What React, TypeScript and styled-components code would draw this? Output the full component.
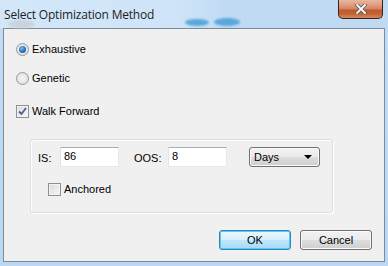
import React from 'react'
import styled, { createGlobalStyle } from 'styled-components'

const Global = createGlobalStyle`
  html, body { margin: 0; padding: 0; }
  body { font-family: "Liberation Sans", Arial, sans-serif; }
`

const Frame = styled.div`
  position: relative;
  width: 388px;
  height: 266px;
  box-sizing: border-box;
  background: linear-gradient(180deg, #c2dcf4 0%, #bcd7f1 100%);
  display: flex;
  flex-direction: column;
  overflow: hidden;
`

const TitleBar = styled.div`
  height: 28px;
  display: flex;
  align-items: flex-start;
  justify-content: space-between;
  flex-shrink: 0;
  background: linear-gradient(90deg, #d3e7f9 0%, #cfe4f8 45%, #c0daf3 60%, #c0daf3 100%);
`

const Title = styled.div`
  font-family: "Open Sans", "Noto Sans", sans-serif;
  font-size: 12px;
  color: #1e1e1e;
  padding: 6px 0 0 4px;
  letter-spacing: -0.2px;
`

const Smudge = styled.div<{ $x: number; $y: number; $w: number; $h: number; $c: string }>`
  position: absolute;
  left: ${p => p.$x}px;
  top: ${p => p.$y}px;
  width: ${p => p.$w}px;
  height: ${p => p.$h}px;
  border-radius: 50%;
  background: ${p => p.$c};
  filter: blur(1px);
`

const CloseButton = styled.div`
  width: 45px;
  height: 19px;
  margin-right: 5px;
  box-sizing: border-box;
  border: 1px solid #3b2216;
  border-top: none;
  border-radius: 0 0 5px 5px;
  background: linear-gradient(180deg, #e6b89d 0%, #e09a80 30%, #d4825f 50%, #c05a2c 55%, #c2602f 75%, #d08a67 100%);
  display: flex;
  align-items: center;
  justify-content: center;
`

const Client = styled.div`
  flex: 1;
  margin: 0 3px 4px 3px;
  border: 1px solid #7c8b99;
  background: #f0f0f0;
  display: flex;
  flex-direction: column;
  padding: 14px 0 0 12px;
  font-size: 11px;
  color: #000;
`

const OptionRow = styled.label<{ $mt?: number; $ml?: number }>`
  display: flex;
  align-items: center;
  gap: 3px;
  height: 13px;
  margin-top: ${p => p.$mt ?? 0}px;
  margin-left: ${p => p.$ml ?? 0}px;
  line-height: 13px;
`

const Radio = styled.span<{ $checked?: boolean }>`
  width: 13px;
  height: 13px;
  box-sizing: border-box;
  border-radius: 50%;
  border: 1px solid #8f99a6;
  background: radial-gradient(circle at 50% 50%, #f4f4f4 0%, #dcdcdc 100%);
  display: flex;
  align-items: center;
  justify-content: center;
  &::after {
    content: '';
    display: ${p => (p.$checked ? 'block' : 'none')};
    width: 7px;
    height: 7px;
    border-radius: 50%;
    background: radial-gradient(circle at 40% 35%, #7cc0f0 0%, #2a6fb8 55%, #1b4f8f 100%);
  }
`

const Box = styled.span`
  width: 13px;
  height: 13px;
  box-sizing: border-box;
  border: 1px solid #8e8f8f;
  background: linear-gradient(135deg, #dcdcdc 0%, #f5f5f5 100%);
  box-shadow: inset 0 0 0 1px #f4f4f4;
  display: flex;
  align-items: center;
  justify-content: center;
`

const Group = styled.div`
  margin: 21px 0 0 14px;
  width: 303px;
  height: 74px;
  box-sizing: border-box;
  border: 1px solid #d5dfe5;
  border-radius: 3px;
  box-shadow: inset 1px 1px 0 #fff, 1px 1px 0 #fff;
  padding: 7px 0 0 7px;
  display: flex;
  flex-direction: column;
`

const FieldRow = styled.div`
  display: flex;
  align-items: center;
  height: 20px;
`

const FieldLabel = styled.span<{ $w: number }>`
  width: ${p => p.$w}px;
  padding-top: 2px;
`

const TextInput = styled.div<{ $mr: number }>`
  width: 59px;
  height: 20px;
  box-sizing: border-box;
  border: 1px solid #e3e9ef;
  border-top-color: #abadb3;
  border-left-color: #e2e3ea;
  background: #fff;
  padding: 2px 0 0 3px;
  margin-right: ${p => p.$mr}px;
`

const Select = styled.div`
  width: 71px;
  height: 20px;
  box-sizing: border-box;
  border: 1px solid #707070;
  border-radius: 3px;
  background: linear-gradient(180deg, #f2f2f2 0%, #ebebeb 48%, #dddddd 52%, #cfcfcf 100%);
  box-shadow: inset 0 0 0 1px #fbfbfb;
  display: flex;
  align-items: center;
  justify-content: space-between;
  padding: 0 7px 0 4px;
`

const Arrow = styled.span`
  width: 0;
  height: 0;
  border-left: 4px solid transparent;
  border-right: 4px solid transparent;
  border-top: 4px solid #000;
`

const Buttons = styled.div`
  margin-top: auto;
  margin-bottom: 11px;
  margin-right: 12px;
  display: flex;
  justify-content: flex-end;
  gap: 9px;
`

const Button = styled.div<{ $default?: boolean }>`
  width: 72px;
  height: 20px;
  box-sizing: border-box;
  border: 1px solid ${p => (p.$default ? '#3c7fb1' : '#707070')};
  border-radius: 3px;
  background: ${p =>
    p.$default
      ? 'linear-gradient(180deg, #eaf6fd 0%, #d9f0fc 48%, #bee6fd 52%, #a7d9f5 100%)'
      : 'linear-gradient(180deg, #f2f2f2 0%, #ebebeb 48%, #dddddd 52%, #cfcfcf 100%)'};
  box-shadow: inset 0 0 0 1px ${p => (p.$default ? '#48d0f8' : '#fbfbfb')};
  display: flex;
  align-items: center;
  justify-content: center;
`

const Check = () => (
  <svg width="9" height="9" viewBox="0 0 9 9">
    <path d="M1 4.5 L3.5 7 L8 1" fill="none" stroke="#4a5e8c" strokeWidth="1.8" />
  </svg>
)

export default function App() {
  return (
    <>
      <Global />
      <Frame>
        <TitleBar>
          <Title>Select Optimization Method</Title>
          <CloseButton>
            <svg width="12" height="10" viewBox="0 0 12 10">
              <path d="M2 1 L10 9 M10 1 L2 9" stroke="#5a5a5a" strokeWidth="3.4" strokeLinecap="square" />
              <path d="M2 1 L10 9 M10 1 L2 9" stroke="#fff" strokeWidth="1.8" strokeLinecap="square" />
            </svg>
          </CloseButton>
        </TitleBar>
        <Smudge $x={185} $y={19} $w={24} $h={7} $c="#5aa7dc" />
        <Smudge $x={214} $y={18} $w={26} $h={8} $c="#5aa7dc" />
        <Smudge $x={8} $y={20} $w={27} $h={8} $c="#c9d3dc" />
        <Client>
          <OptionRow>
            <Radio $checked />
            Exhaustive
          </OptionRow>
          <OptionRow $mt={16}>
            <Radio />
            Genetic
          </OptionRow>
          <OptionRow $mt={20}>
            <Box>
              <Check />
            </Box>
            Walk Forward
          </OptionRow>
          <Group>
            <FieldRow>
              <FieldLabel $w={22}>IS:</FieldLabel>
              <TextInput $mr={15}>86</TextInput>
              <FieldLabel $w={34}>OOS:</FieldLabel>
              <TextInput $mr={22}>8</TextInput>
              <Select>
                Days
                <Arrow />
              </Select>
            </FieldRow>
            <OptionRow $mt={16} $ml={10}>
              <Box />
              Anchored
            </OptionRow>
          </Group>
          <Buttons>
            <Button $default>OK</Button>
            <Button>Cancel</Button>
          </Buttons>
        </Client>
      </Frame>
    </>
  )
}
